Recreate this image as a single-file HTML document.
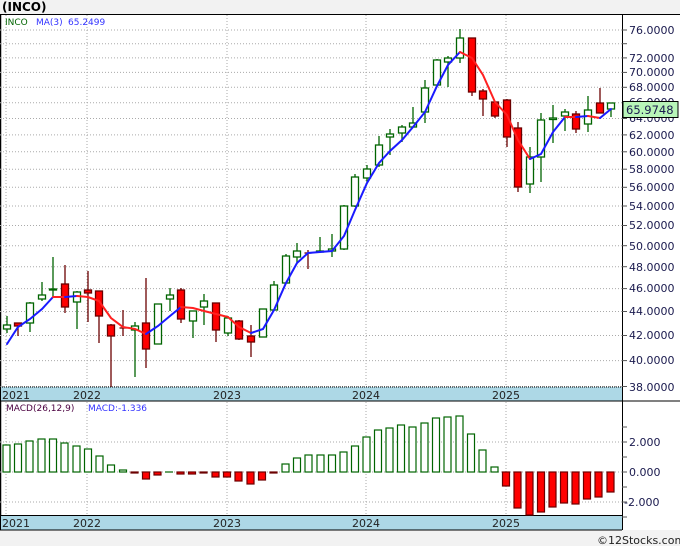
<!DOCTYPE html>
<html><head><meta charset="utf-8"><style>
html,body{margin:0;padding:0;background:#f2f2f2;width:680px;height:546px;overflow:hidden}
svg{display:block;font-family:"DejaVu Sans","Liberation Sans",sans-serif}
</style></head><body>
<svg width="680" height="546" viewBox="0 0 680 546" xmlns="http://www.w3.org/2000/svg">
<rect x="0" y="0" width="680" height="546" fill="#f2f2f2"/>
<text x="2" y="11" font-size="12" font-weight="bold" fill="#000">(INCO)</text>
<rect x="0" y="14" width="680" height="516" fill="#fff"/>
<line x1="0" y1="14.5" x2="680" y2="14.5" stroke="#000"/>
<line x1="0.5" y1="14" x2="0.5" y2="530" stroke="#000" stroke-width="1.5"/>
<!-- grid main -->
<g stroke="#aaa" stroke-dasharray="1,2" stroke-width="1">
<line x1="0" y1="30" x2="622" y2="30"/><line x1="0" y1="43.7" x2="622" y2="43.7"/><line x1="0" y1="57.9" x2="622" y2="57.9"/><line x1="0" y1="72.4" x2="622" y2="72.4"/><line x1="0" y1="87.3" x2="622" y2="87.3"/><line x1="0" y1="102.7" x2="622" y2="102.7"/><line x1="0" y1="118.5" x2="622" y2="118.5"/><line x1="0" y1="134.9" x2="622" y2="134.9"/><line x1="0" y1="151.8" x2="622" y2="151.8"/><line x1="0" y1="169.2" x2="622" y2="169.2"/><line x1="0" y1="187.3" x2="622" y2="187.3"/><line x1="0" y1="206" x2="622" y2="206"/><line x1="0" y1="225.5" x2="622" y2="225.5"/><line x1="0" y1="245.7" x2="622" y2="245.7"/><line x1="0" y1="266.7" x2="622" y2="266.7"/><line x1="0" y1="288.6" x2="622" y2="288.6"/><line x1="0" y1="311.5" x2="622" y2="311.5"/><line x1="0" y1="335.5" x2="622" y2="335.5"/><line x1="0" y1="360.6" x2="622" y2="360.6"/><line x1="0" y1="386.5" x2="622" y2="386.5"/>
<line x1="6" y1="15" x2="6" y2="530"/><line x1="87" y1="15" x2="87" y2="530"/><line x1="227" y1="15" x2="227" y2="530"/><line x1="366" y1="15" x2="366" y2="530"/><line x1="506" y1="15" x2="506" y2="530"/>
<line x1="0" y1="442" x2="622" y2="442"/><line x1="0" y1="472" x2="622" y2="472"/><line x1="0" y1="502" x2="622" y2="502"/>
</g>
<text x="5" y="25" font-size="9" fill="#006400">INCO</text>
<text x="36" y="25" font-size="9" fill="#3333ff">MA(3)</text>
<text x="68" y="25" font-size="9" fill="#3333ff">65.2499</text>
<!-- candles -->
<g stroke-width="1.3">
<g stroke="#006400" fill="#fff">
<line x1="7" y1="316" x2="7" y2="333"/><rect x="3.5" y="325" width="7" height="4"/>
<line x1="30" y1="302" x2="30" y2="332"/><rect x="26.5" y="303" width="7" height="20"/>
<line x1="42" y1="282" x2="42" y2="301"/><rect x="38.5" y="295" width="7" height="4"/>
<line x1="53" y1="257" x2="53" y2="298"/><rect x="49.5" y="289" width="7" height="1"/>
<line x1="77" y1="291" x2="77" y2="329"/><rect x="73.5" y="292" width="7" height="10"/>
<line x1="135" y1="322" x2="135" y2="377"/><rect x="131.5" y="326" width="7" height="4"/>
<line x1="158" y1="304" x2="158" y2="344"/><rect x="154.5" y="304" width="7" height="40"/>
<line x1="170" y1="288" x2="170" y2="311"/><rect x="166.5" y="295" width="7" height="4"/>
<line x1="193" y1="311" x2="193" y2="338"/><rect x="189.5" y="311" width="7" height="10"/>
<line x1="204" y1="294" x2="204" y2="325"/><rect x="200.5" y="301" width="7" height="6"/>
<line x1="228" y1="316" x2="228" y2="336"/><rect x="224.5" y="318" width="7" height="15"/>
<line x1="263" y1="309" x2="263" y2="337"/><rect x="259.5" y="309" width="7" height="28"/>
<line x1="274" y1="281" x2="274" y2="311"/><rect x="270.5" y="285" width="7" height="25"/>
<line x1="286" y1="254" x2="286" y2="283"/><rect x="282.5" y="256" width="7" height="27"/>
<line x1="297" y1="243" x2="297" y2="263"/><rect x="293.5" y="251" width="7" height="6"/>
<line x1="320" y1="237" x2="320" y2="253"/><rect x="316.5" y="251" width="7" height="1"/>
<line x1="332" y1="234" x2="332" y2="257"/><rect x="328.5" y="249" width="7" height="2"/>
<line x1="344" y1="205" x2="344" y2="250"/><rect x="340.5" y="206" width="7" height="43"/>
<line x1="355" y1="174" x2="355" y2="207"/><rect x="351.5" y="177" width="7" height="29"/>
<line x1="367" y1="165" x2="367" y2="182"/><rect x="363.5" y="169" width="7" height="9"/>
<line x1="379" y1="136" x2="379" y2="167"/><rect x="375.5" y="145" width="7" height="20"/>
<line x1="390" y1="129" x2="390" y2="155"/><rect x="386.5" y="134" width="7" height="3"/>
<line x1="402" y1="125" x2="402" y2="142"/><rect x="398.5" y="127" width="7" height="6"/>
<line x1="413" y1="107" x2="413" y2="127"/><rect x="409.5" y="123" width="7" height="4"/>
<line x1="425" y1="80" x2="425" y2="123"/><rect x="421.5" y="88" width="7" height="24"/>
<line x1="437" y1="59" x2="437" y2="86"/><rect x="433.5" y="60" width="7" height="25"/>
<line x1="448" y1="56" x2="448" y2="87"/><rect x="444.5" y="58" width="7" height="4"/>
<line x1="460" y1="29" x2="460" y2="63"/><rect x="456.5" y="38" width="7" height="20"/>
<line x1="530" y1="147" x2="530" y2="193"/><rect x="526.5" y="157" width="7" height="27"/>
<line x1="541" y1="113" x2="541" y2="182"/><rect x="537.5" y="120" width="7" height="37"/>
<line x1="553" y1="105" x2="553" y2="143"/><rect x="549.5" y="118" width="7" height="1.5"/>
<line x1="565" y1="109" x2="565" y2="131"/><rect x="561.5" y="112" width="7" height="4"/>
<line x1="588" y1="96" x2="588" y2="132"/><rect x="584.5" y="110" width="7" height="14"/>
<line x1="611" y1="103" x2="611" y2="117"/><rect x="607.5" y="103" width="7" height="6"/>
</g>
<g stroke="#6b0000" fill="#ff0000">
<line x1="18" y1="323" x2="18" y2="336"/><rect x="14.5" y="323" width="7" height="3"/>
<line x1="65" y1="265" x2="65" y2="313"/><rect x="61.5" y="284" width="7" height="23"/>
<line x1="88" y1="271" x2="88" y2="322"/><rect x="84.5" y="290" width="7" height="3"/>
<line x1="99" y1="291" x2="99" y2="343"/><rect x="95.5" y="291" width="7" height="25"/>
<line x1="111" y1="324" x2="111" y2="387"/><rect x="107.5" y="325" width="7" height="11"/>
<line x1="123" y1="310" x2="123" y2="336"/><line x1="119.5" y1="328" x2="126.5" y2="328"/>
<line x1="146" y1="278" x2="146" y2="368"/><rect x="142.5" y="323" width="7" height="26"/>
<line x1="181" y1="288" x2="181" y2="323"/><rect x="177.5" y="290" width="7" height="29"/>
<line x1="216" y1="303" x2="216" y2="342"/><rect x="212.5" y="303" width="7" height="27"/>
<line x1="239" y1="320" x2="239" y2="340"/><rect x="235.5" y="321" width="7" height="18"/>
<line x1="251" y1="325" x2="251" y2="357"/><rect x="247.5" y="336" width="7" height="6"/>
<line x1="308" y1="250" x2="308" y2="269"/><line x1="304.5" y1="253" x2="311.5" y2="253"/>
<line x1="472" y1="38" x2="472" y2="96"/><rect x="468.5" y="38" width="7" height="54"/>
<line x1="483" y1="89" x2="483" y2="116"/><rect x="479.5" y="91" width="7" height="8"/>
<line x1="495" y1="102" x2="495" y2="118"/><rect x="491.5" y="102" width="7" height="14"/>
<line x1="507" y1="99" x2="507" y2="147"/><rect x="503.5" y="100" width="7" height="37"/>
<line x1="518" y1="122" x2="518" y2="192"/><rect x="514.5" y="128" width="7" height="59"/>
<line x1="576" y1="111" x2="576" y2="133"/><rect x="572.5" y="114" width="7" height="15"/>
<line x1="600" y1="88" x2="600" y2="113"/><rect x="596.5" y="103" width="7" height="10"/>
</g>
</g>
<!-- MA -->
<g fill="none" stroke-width="2" stroke-linecap="round">
<polyline stroke="#1a1aff" points="7,344 18,327 30,319 42,309 53,297"/>
<polyline stroke="#ff2020" points="53,297 65,297"/>
<polyline stroke="#1a1aff" points="65,297 77,296"/>
<polyline stroke="#ff2020" points="77,296 88,297 99,301 111,318 123,327 135,329 146,334"/>
<polyline stroke="#1a1aff" points="146,334 158,326 170,316 181,307"/>
<polyline stroke="#ff2020" points="181,307 193,308 204,311 216,314 228,317 239,327 251,333"/>
<polyline stroke="#1a1aff" points="251,333 263,329 274,310 286,283 297,263 308,253 320,252 332,251 344,236 355,210 367,183 379,163 390,151 402,140 413,127 425,112 437,86 448,65 460,52"/>
<polyline stroke="#ff2020" points="460,52 472,58 483,75 495,102 507,115 518,140 530,159"/>
<polyline stroke="#1a1aff" points="530,159 541,154 553,132 565,117"/>
<polyline stroke="#ff2020" points="565,117 576,117"/>
<polyline stroke="#1a1aff" points="576,117 588,116"/>
<polyline stroke="#ff2020" points="588,116 600,118"/>
<polyline stroke="#1a1aff" points="600,118 611,109"/>
</g>
<!-- right axis -->
<line x1="622.5" y1="14" x2="622.5" y2="530" stroke="#000"/>
<g stroke="#555"><line x1="622" y1="30" x2="627" y2="30"/><line x1="622" y1="43.7" x2="627" y2="43.7"/><line x1="622" y1="57.9" x2="627" y2="57.9"/><line x1="622" y1="72.4" x2="627" y2="72.4"/><line x1="622" y1="87.3" x2="627" y2="87.3"/><line x1="622" y1="118.5" x2="627" y2="118.5"/><line x1="622" y1="134.9" x2="627" y2="134.9"/><line x1="622" y1="151.8" x2="627" y2="151.8"/><line x1="622" y1="169.2" x2="627" y2="169.2"/><line x1="622" y1="187.3" x2="627" y2="187.3"/><line x1="622" y1="206" x2="627" y2="206"/><line x1="622" y1="225.5" x2="627" y2="225.5"/><line x1="622" y1="245.7" x2="627" y2="245.7"/><line x1="622" y1="266.7" x2="627" y2="266.7"/><line x1="622" y1="288.6" x2="627" y2="288.6"/><line x1="622" y1="311.5" x2="627" y2="311.5"/><line x1="622" y1="335.5" x2="627" y2="335.5"/><line x1="622" y1="360.6" x2="627" y2="360.6"/><line x1="622" y1="386.5" x2="627" y2="386.5"/>
<line x1="622" y1="427" x2="627" y2="427"/><line x1="622" y1="442" x2="627" y2="442"/><line x1="622" y1="457" x2="627" y2="457"/><line x1="622" y1="472" x2="627" y2="472"/><line x1="622" y1="487" x2="627" y2="487"/><line x1="622" y1="502" x2="627" y2="502"/><line x1="622" y1="517" x2="627" y2="517"/></g>
<g font-size="11" fill="#1a1a4e">
<text x="629" y="34">76.0000</text><text x="629" y="62">72.0000</text><text x="629" y="76">70.0000</text><text x="629" y="91">68.0000</text><text x="629" y="106">66.0000</text><text x="629" y="122">64.0000</text><text x="629" y="139">62.0000</text><text x="629" y="156">60.0000</text><text x="629" y="173">58.0000</text><text x="629" y="191">56.0000</text><text x="629" y="210">54.0000</text><text x="629" y="229">52.0000</text><text x="629" y="250">50.0000</text><text x="629" y="271">48.0000</text><text x="629" y="292">46.0000</text><text x="629" y="315">44.0000</text><text x="629" y="339">42.0000</text><text x="629" y="364">40.0000</text><text x="629" y="391">38.0000</text>
<text x="629" y="446">2.000</text><text x="629" y="476">0.000</text><text x="624" y="506">-2.000</text>
</g>
<rect x="623" y="101.5" width="55" height="16" fill="#b8f5b8" stroke="#000"/>
<text x="626" y="114" font-size="11.5" fill="#1a1a4e">65.9748</text>
<!-- year bands -->
<rect x="1" y="387" width="621" height="14" fill="#add8e6"/>
<line x1="0" y1="387" x2="622" y2="387" stroke="#000" stroke-dasharray="1,1"/>
<line x1="0" y1="401" x2="680" y2="401" stroke="#000"/>
<rect x="1" y="515.5" width="621" height="14" fill="#add8e6"/>
<line x1="0" y1="515.5" x2="622" y2="515.5" stroke="#000"/>
<line x1="0" y1="530" x2="622" y2="530" stroke="#000"/>
<g font-size="11" fill="#222">
<text x="2" y="399">2021</text><text x="73" y="399">2022</text><text x="213" y="399">2023</text><text x="352" y="399">2024</text><text x="492" y="399">2025</text>
<text x="2" y="527">2021</text><text x="73" y="527">2022</text><text x="213" y="527">2023</text><text x="352" y="527">2024</text><text x="492" y="527">2025</text>
</g>
<text x="6" y="411" font-size="9" fill="#4b0040">MACD(26,12,9)</text>
<text x="88" y="411" font-size="9" fill="#3333ff">MACD:-1.336</text>
<!-- MACD bars -->
<g stroke="#006400" fill="#fff" stroke-width="1.2">
<rect x="3" y="445" width="7" height="27"/><rect x="14.5" y="444" width="7" height="28"/><rect x="26" y="441" width="7" height="31"/><rect x="38" y="439" width="7" height="33"/><rect x="49.5" y="439" width="7" height="33"/><rect x="61" y="443" width="7" height="29"/><rect x="73" y="446" width="7" height="26"/><rect x="84.5" y="449" width="7" height="23"/><rect x="96" y="456" width="7" height="16"/><rect x="107.5" y="465" width="7" height="7"/><rect x="119.5" y="470" width="7" height="2"/><line x1="165" y1="472" x2="173" y2="472"/>
<rect x="282" y="464" width="7" height="8"/><rect x="293.5" y="458" width="7" height="14"/><rect x="305" y="455" width="7" height="17"/><rect x="317" y="455" width="7" height="17"/><rect x="328.5" y="455" width="7" height="17"/><rect x="340" y="452" width="7" height="20"/><rect x="351.5" y="446" width="7" height="26"/><rect x="363" y="437" width="7" height="35"/><rect x="374.5" y="430" width="7" height="42"/><rect x="386" y="428" width="7" height="44"/><rect x="397.5" y="425" width="7" height="47"/><rect x="409" y="427" width="7" height="45"/><rect x="421" y="423" width="7" height="49"/><rect x="432.5" y="418" width="7" height="54"/><rect x="444" y="417" width="7" height="55"/><rect x="456" y="416" width="7" height="56"/><rect x="467.5" y="434" width="7" height="38"/><rect x="479" y="450" width="7" height="22"/><rect x="491" y="467" width="7" height="5"/>
</g>
<g stroke="#6b0000" fill="#ff0000" stroke-width="1.2">
<rect x="131" y="472" width="7" height="1"/><rect x="142.5" y="472" width="7" height="7"/><rect x="154" y="472" width="7" height="3"/><rect x="177" y="472" width="7" height="2"/><rect x="188.5" y="472" width="7" height="2"/><rect x="200" y="472" width="7" height="1"/><rect x="212" y="472" width="7" height="5"/><rect x="223.5" y="472" width="7" height="5"/><rect x="235" y="472" width="7" height="9"/><rect x="247" y="472" width="7" height="12"/><rect x="258.5" y="472" width="7" height="8"/><rect x="270" y="472" width="7" height="1"/>
<rect x="502.5" y="472" width="7" height="14"/><rect x="514" y="472" width="7" height="36"/><rect x="526" y="472" width="7" height="43"/><rect x="537.5" y="472" width="7" height="40"/><rect x="549" y="472" width="7" height="35"/><rect x="560.5" y="472" width="7" height="31"/><rect x="572" y="472" width="7" height="32"/><rect x="583.5" y="472" width="7" height="27"/><rect x="595" y="472" width="7" height="25"/><rect x="607" y="472" width="7" height="20"/>
</g>
<rect x="0" y="530.5" width="680" height="16" fill="#f2f2f2"/>
<line x1="0" y1="530" x2="622" y2="530" stroke="#000"/>
<text x="597" y="544" font-size="11" fill="#222">©12Stocks.com</text>
</svg>
</body></html>
